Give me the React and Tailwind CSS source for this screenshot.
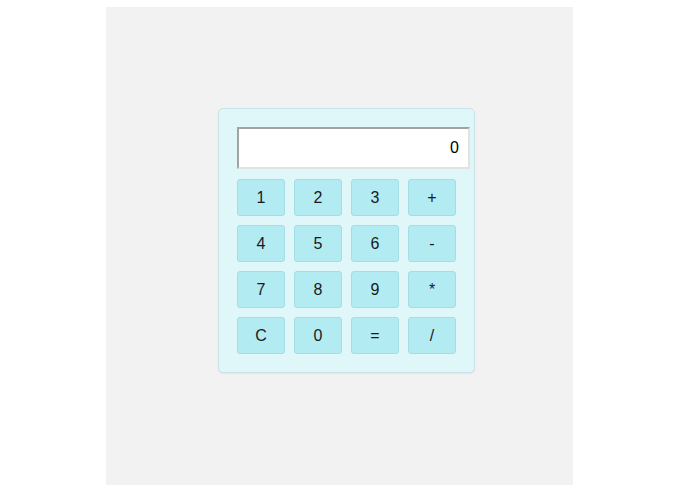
const keys = ['1', '2', '3', '+', '4', '5', '6', '-', '7', '8', '9', '*', 'C', '0', '=', '/'];

export default function App() {
  return (
    <div className="w-[678px] h-[498px] bg-white pt-[7px] pl-[106px]" style={{ fontFamily: '"Liberation Sans", Arial, sans-serif' }}>
      <div className="w-[467px] h-[478px] bg-[#f2f2f2] pt-[101px] pl-[112px]">
        <div className="w-[257px] bg-[#e0f7fa] border border-[#c9e4e8] rounded-[5px] p-[18px] shadow-[0_1px_2px_rgba(0,0,0,0.06)]">
          <div className="w-[233px] h-[42px] bg-white border-2 border-t-[#a3a3a3] border-l-[#a3a3a3] border-b-[#e2e2e2] border-r-[#e2e2e2] flex items-center justify-end pr-[9px] text-[16px] text-black">
            0
          </div>
          <div className="grid grid-cols-[repeat(4,48px)] gap-[9px] mt-[10px]">
            {keys.map(k => (
              <button key={k}
                className="h-[37px] bg-[#b2ebf2] border border-[#a4dde4] rounded-[3px] text-[16px] text-[#1a1a1a] flex items-center justify-center">
                {k}
              </button>
            ))}
          </div>
        </div>
      </div>
    </div>
  );
}
